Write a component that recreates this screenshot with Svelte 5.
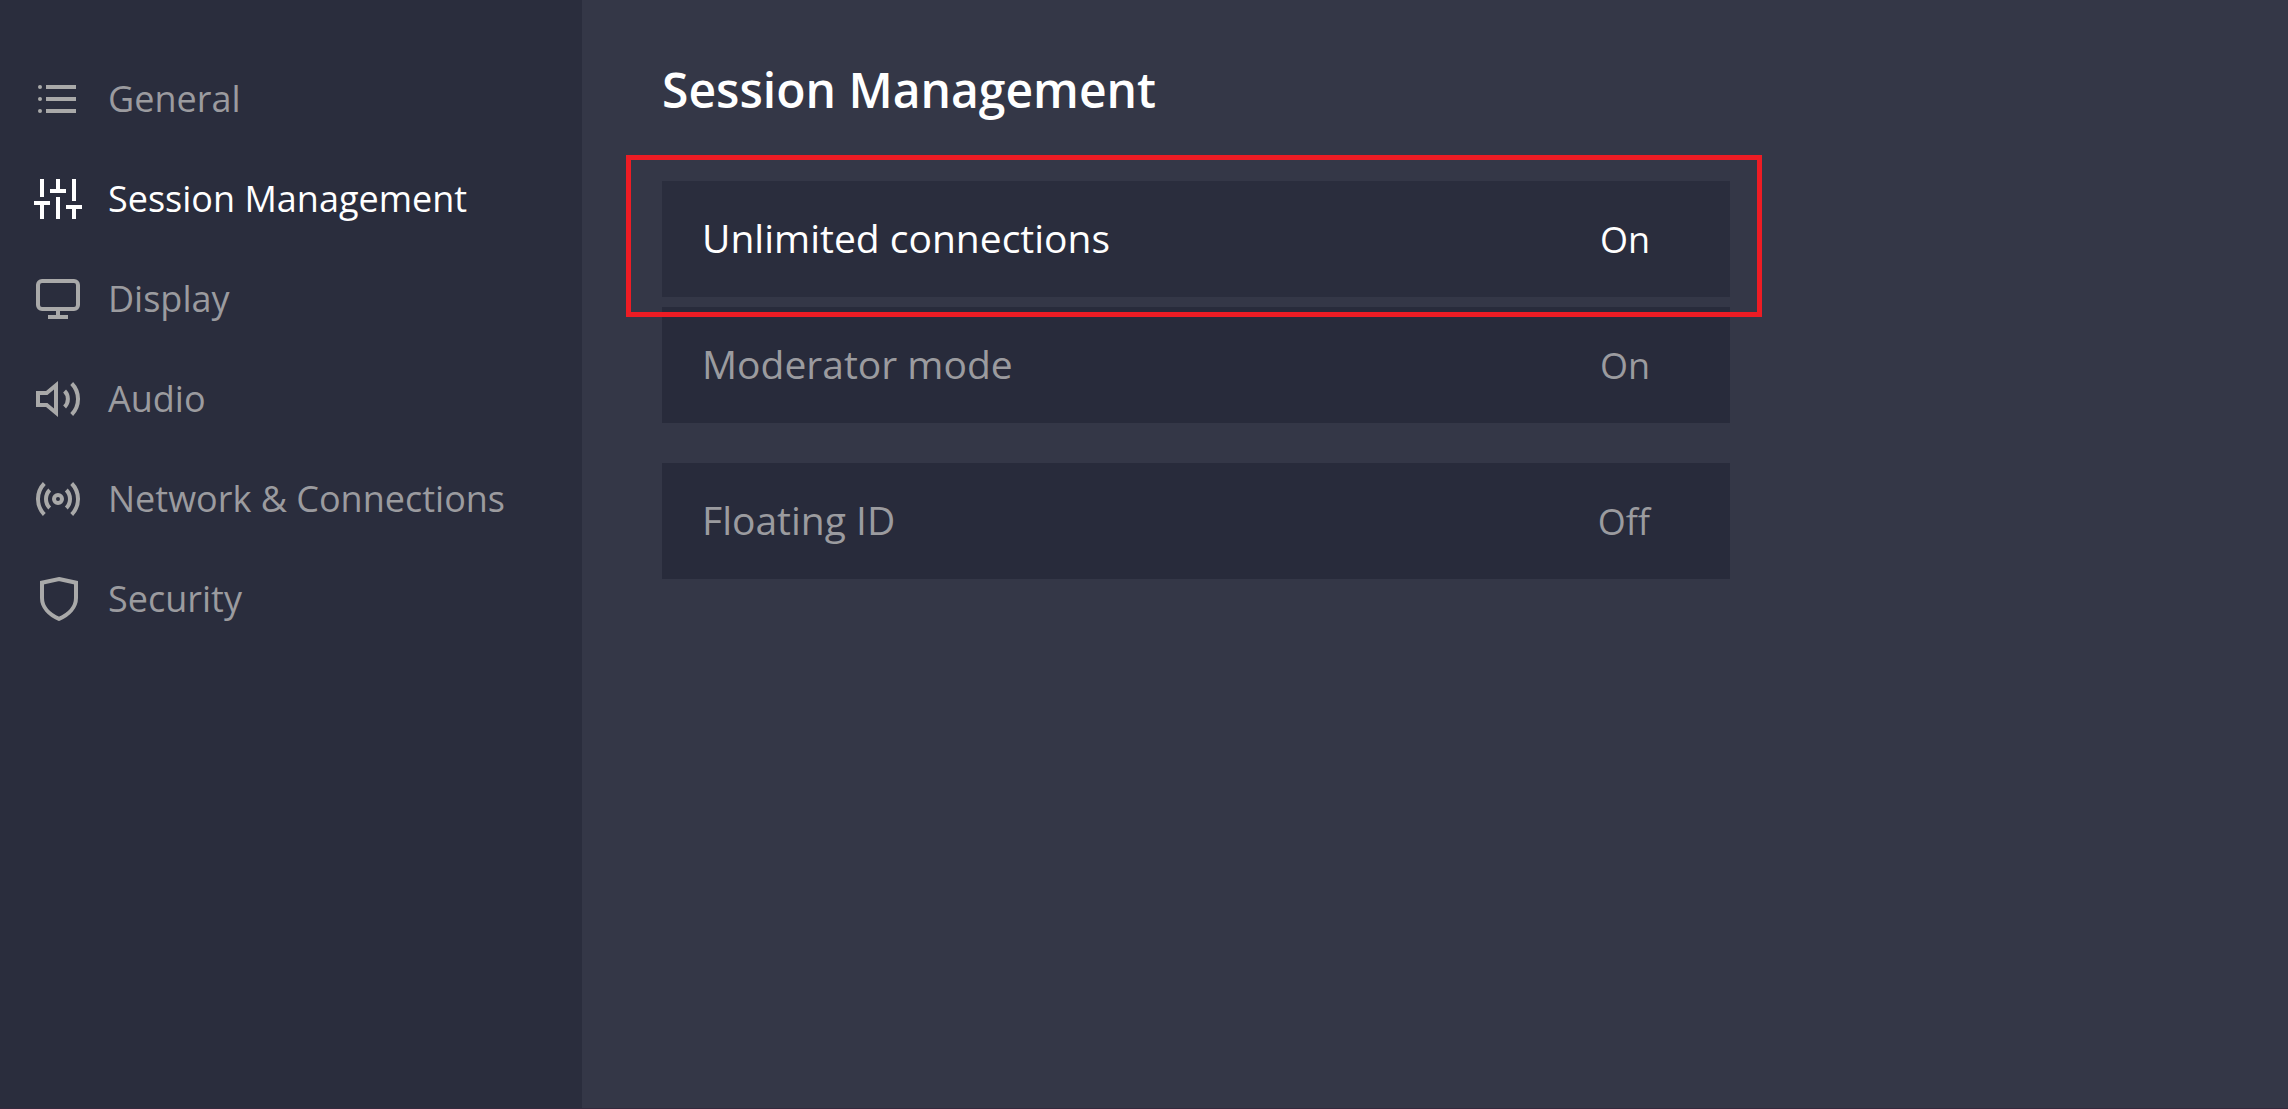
<script>
  let active = $state('session');

  const nav = [
    { id: 'general', label: 'General' },
    { id: 'session', label: 'Session Management' },
    { id: 'display', label: 'Display' },
    { id: 'audio', label: 'Audio' },
    { id: 'network', label: 'Network & Connections' },
    { id: 'security', label: 'Security' },
  ];

  const groups = [
    [
      { label: 'Unlimited connections', value: 'On', highlighted: true },
      { label: 'Moderator mode', value: 'On' },
    ],
    [{ label: 'Floating ID', value: 'Off' }],
  ];
</script>

{#snippet icon(id)}
  <svg class="icon" viewBox="0 0 48 48" aria-hidden="true">
    {#if id === 'general'}
      <g class="solid">
        <circle cx="6" cy="12" r="2" />
        <circle cx="6" cy="24" r="2" />
        <circle cx="6" cy="36" r="2" />
      </g>
      <path d="M12 12H42M12 24H42M12 36H42" />
    {:else if id === 'session'}
      <path d="M8 4V22M0 28H16M8 28V44M24 4V16M16 16H32M24 22V44M40 4V26M32 32H48M40 32V44" />
    {:else if id === 'display'}
      <rect x="4" y="6" width="40" height="28" rx="4" />
      <path d="M24 34V42M14 42H34" />
    {:else if id === 'audio'}
      <path d="M4 18H12.7L22 10.3V37.7L12.7 30H4Z" />
      <path d="M30.6 16A11.4 11.4 0 0 1 30.6 32M37.7 8.5A22.2 22.2 0 0 1 37.7 39.5" />
    {:else if id === 'network'}
      <circle cx="24" cy="24" r="4" />
      <path d="M32.3 15A12.8 12.8 0 0 1 32.3 33M15.7 15A12.8 12.8 0 0 0 15.7 33" />
      <path d="M37.7 8.5A22.2 22.2 0 0 1 37.7 39.5M10.3 8.5A22.2 22.2 0 0 0 10.3 39.5" />
    {:else}
      <path d="M25 4L42 7.7V23C42 32 35 39.5 25 43.8C15 39.5 8 32 8 23V7.7Z" />
    {/if}
  </svg>
{/snippet}

<div class="app">
  <nav class="sidebar" aria-label="Settings">
    {#each nav as item}
      <button
        class="nav-item"
        class:active={active === item.id}
        aria-current={active === item.id ? 'page' : undefined}
        onclick={() => (active = item.id)}
      >
        {@render icon(item.id)}
        <span>{item.label}</span>
      </button>
    {/each}
  </nav>

  <main class="content">
    <h1>Session Management</h1>
    <div class="groups">
      {#each groups as group}
        <div class="group">
          {#each group as row}
            <button class="row" class:highlighted={row.highlighted}>
              <span class="label">{row.label}</span>
              <span class="value">{row.value}</span>
            </button>
          {/each}
        </div>
      {/each}
    </div>
  </main>
</div>

<style>
  :global(body) {
    margin: 0;
    background: #343747;
  }

  .app {
    display: flex;
    box-sizing: border-box;
    min-height: 100vh;
    border-bottom: 1px solid #33293d;
    background: #343747;
    font-family: 'Open Sans', 'Noto Sans', sans-serif;
  }

  button {
    margin: 0;
    border: 0;
    font: inherit;
    text-align: left;
    cursor: pointer;
  }

  .sidebar {
    display: flex;
    flex: 0 0 auto;
    flex-direction: column;
    box-sizing: border-box;
    min-width: 582px;
    padding: 49px 34px;
    background: #2a2d3d;
  }

  .nav-item {
    display: flex;
    align-items: center;
    gap: 26px;
    height: 100px;
    padding: 0;
    background: none;
    color: #9b9b9f;
    font-size: 36px;
    line-height: 48px;
    white-space: nowrap;
  }

  .nav-item.active {
    color: #fff;
  }

  .icon {
    flex: none;
    width: 48px;
    height: 48px;
    fill: none;
    stroke: #a9a9a9;
    stroke-width: 4;
  }

  .icon .solid {
    fill: #a9a9a9;
    stroke: none;
  }

  .active .icon {
    stroke: #fff;
  }

  .active .icon .solid {
    fill: #fff;
  }

  .content {
    flex: 1;
    min-width: 0;
    padding: 58px 80px;
  }

  h1 {
    margin: 0 0 59px;
    color: #fff;
    font-size: 48px;
    font-weight: 600;
    line-height: 64px;
  }

  .groups {
    display: grid;
    gap: 40px;
    max-width: 1068px;
  }

  .group {
    display: grid;
    gap: 10px;
  }

  .row {
    position: relative;
    display: flex;
    align-items: baseline;
    justify-content: space-between;
    box-sizing: border-box;
    min-height: 116px;
    padding: 29px 80px 28px 40px;
    background: #282b3b;
    color: #9b9b9f;
    line-height: 56px;
  }

  .label {
    font-size: 39px;
  }

  .value {
    font-size: 36px;
  }

  .row.highlighted {
    z-index: 1;
    background: #2a2d3d;
    color: #fff;
  }

  .row.highlighted::after {
    content: '';
    position: absolute;
    inset: -26px -32px -20px -36px;
    border: 5px solid #ed1c24;
    pointer-events: none;
  }
</style>
